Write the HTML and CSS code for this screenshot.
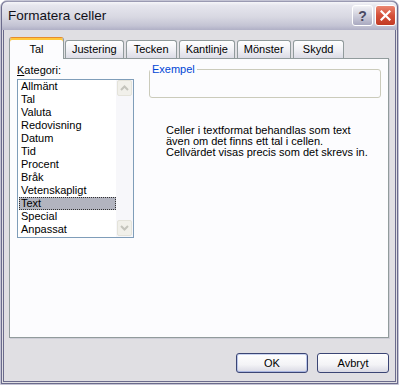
FILE: index.html
```html
<!DOCTYPE html>
<html lang="sv">
<head>
  <meta charset="UTF-8">
  <meta name="viewport" content="width=device-width, initial-scale=1.0">
  <title>Formatera celler</title>
  <link rel="stylesheet" href="styles.css">
</head>
<body>
  <div class="window">
    <div class="titlebar">
      <span class="title">Formatera celler</span>
      <div class="caption-buttons">
        <button type="button" class="caption-btn help">?</button>
        <button type="button" class="caption-btn close">
          <svg width="11" height="11" viewBox="0 0 11 11">
            <path d="M1.5 1.5 L9.5 9.5 M9.5 1.5 L1.5 9.5" stroke="#fff" stroke-width="2.2" stroke-linecap="square"/>
          </svg>
        </button>
      </div>
    </div>

    <div class="client">
      <div class="tabs">
        <div class="tab active">Tal</div>
        <div class="tab">Justering</div>
        <div class="tab">Tecken</div>
        <div class="tab">Kantlinje</div>
        <div class="tab">Mönster</div>
        <div class="tab">Skydd</div>
      </div>

      <div class="panel">
        <div class="category">
          <label class="field-label"><u>K</u>ategori:</label>
          <div class="listbox">
            <ul class="list">
              <li>Allmänt</li>
              <li>Tal</li>
              <li>Valuta</li>
              <li>Redovisning</li>
              <li>Datum</li>
              <li>Tid</li>
              <li>Procent</li>
              <li>Bråk</li>
              <li>Vetenskapligt</li>
              <li class="selected">Text</li>
              <li>Special</li>
              <li>Anpassat</li>
            </ul>
            <div class="scrollbar">
              <span class="scroll-btn">
                <svg width="9" height="6" viewBox="0 0 9 6"><path d="M1 5 L4.5 1.5 L8 5" fill="none" stroke="#c4c4bc" stroke-width="2"/></svg>
              </span>
              <span class="scroll-btn">
                <svg width="9" height="6" viewBox="0 0 9 6"><path d="M1 1 L4.5 4.5 L8 1" fill="none" stroke="#c4c4bc" stroke-width="2"/></svg>
              </span>
            </div>
          </div>
        </div>

        <div class="details">
          <fieldset class="sample">
            <legend>Exempel</legend>
          </fieldset>
          <p class="description">
            Celler i textformat behandlas som text<br>
            även om det finns ett tal i cellen.<br>
            Cellvärdet visas precis som det skrevs in.
          </p>
        </div>
      </div>

      <div class="actions">
        <button type="button" class="btn default">OK</button>
        <button type="button" class="btn">Avbryt</button>
      </div>
    </div>
  </div>
</body>
</html>
```

FILE: styles.css
```css
body {
  margin: 0;
  background: #fff;
  font-family: 'Liberation Sans', Arial, sans-serif;
  font-size: 11px;
  color: #000;
}
.window {
  box-sizing: border-box;
  width: 399px;
  height: 385px;
  border: 1px solid #c4c4d4;
  border-radius: 7px 7px 0 0;
  background: #e0dfe3;
}
.titlebar {
  display: flex;
  justify-content: space-between;
  align-items: center;
  height: 29px;
  padding: 0 2px 0 7px;
  border-radius: 6px 6px 0 0;
  background: linear-gradient(#fbfbfd 0%, #e6e6ee 15%, #d8d8e2 55%, #c4c4d4 85%, #b0b0c6 100%);
  box-shadow: inset 1px 0 #6b6b8c, inset -1px 0 #6b6b8c, inset 0 1px #9a9ab2;
}
.title {
  font-size: 13.5px;
  color: #101018;
}
.caption-buttons {
  display: flex;
  gap: 2px;
}
.caption-btn {
  display: flex;
  align-items: center;
  justify-content: center;
  box-sizing: border-box;
  width: 21px;
  height: 21px;
  padding: 0;
  border: 1px solid #fff;
  border-radius: 3px;
}
.help {
  background: linear-gradient(#f2f2f6, #cfcfdc 50%, #a9a9c0);
  color: #4a4a62;
  font: bold 14px 'Liberation Sans', Arial, sans-serif;
}
.close {
  background: linear-gradient(#eb8670, #d4503a 50%, #c23b24);
}
.client {
  box-sizing: border-box;
  height: 354px;
  padding: 7px 6px 0 5px;
  border: 3px double #6b6b8c;
  border-top: 0;
}
.tabs {
  display: flex;
  align-items: flex-end;
  height: 21px;
}
.tab {
  box-sizing: border-box;
  height: 18px;
  min-width: 51px;
  margin-right: 2px;
  padding: 0 6px;
  border: 1px solid #919b9c;
  border-bottom: 0;
  border-radius: 3px 3px 0 0;
  background: linear-gradient(#ffffff, #f1f1f5 50%, #dcdce6);
  line-height: 16px;
  text-align: center;
  white-space: nowrap;
}
.tab.active {
  position: relative;
  z-index: 1;
  height: 22px;
  min-width: 55px;
  margin: 0 1px -1px 0;
  padding-top: 3px;
  border-top-color: #e68b2c;
  background: #fcfcfe;
  box-shadow: inset 0 2px #ffc83c;
}
.panel {
  box-sizing: border-box;
  display: grid;
  grid-template-columns: 117px 232px;
  column-gap: 15px;
  align-items: start;
  height: 280px;
  padding: 5px 0 0 7px;
  border: 1px solid #919b9c;
  background: #fcfcfe;
  box-shadow: 1px 1px 0 #cdcdd6;
}
.field-label {
  display: block;
  line-height: 13px;
  margin-bottom: 2px;
}
.listbox {
  box-sizing: border-box;
  display: flex;
  width: 117px;
  height: 159px;
  border: 1px solid #7f9db9;
  background: #fff;
}
.list {
  flex: 1;
  margin: 0;
  padding: 0 0 0 1px;
  list-style: none;
  line-height: 13px;
}
.list li {
  height: 13px;
  padding-left: 2px;
  white-space: nowrap;
}
.list li.selected {
  background: #b2b4bf;
  outline: 1px dotted #333;
  outline-offset: -1px;
}
.scrollbar {
  box-sizing: border-box;
  display: flex;
  flex-direction: column;
  justify-content: space-between;
  width: 17px;
  padding: 0 1px 1px;
  background: #f7f7fa;
}
.scroll-btn {
  box-sizing: border-box;
  display: flex;
  align-items: center;
  justify-content: center;
  height: 16px;
  border: 1px solid #e4e3da;
  border-radius: 2px;
  background: #f1f0ea;
}
.details {
  margin-top: -1px;
}
.sample {
  box-sizing: content-box;
  height: 33px;
  margin: 0;
  padding: 0;
  min-width: 0;
  border: 1px solid #cbcbbb;
  border-radius: 3px;
}
.sample legend {
  padding: 0 2px;
  line-height: 13px;
  color: #0046d5;
}
.description {
  margin: 27px 0 0 17px;
  line-height: 11px;
}
.actions {
  display: flex;
  justify-content: flex-end;
  gap: 9px;
  margin-top: 15px;
}
.btn {
  box-sizing: border-box;
  width: 72px;
  height: 20px;
  padding: 0;
  border: 1px solid #3b4574;
  border-radius: 3px;
  background: linear-gradient(#ffffff, #f3f3f6 60%, #d9d9e4);
  font: inherit;
  color: #000;
}
.btn.default {
  box-shadow: inset 0 1px #c9d3ef, inset 0 -1px #a9b6e0, inset 1px 0 #bac6ea, inset -1px 0 #bac6ea;
}
```
